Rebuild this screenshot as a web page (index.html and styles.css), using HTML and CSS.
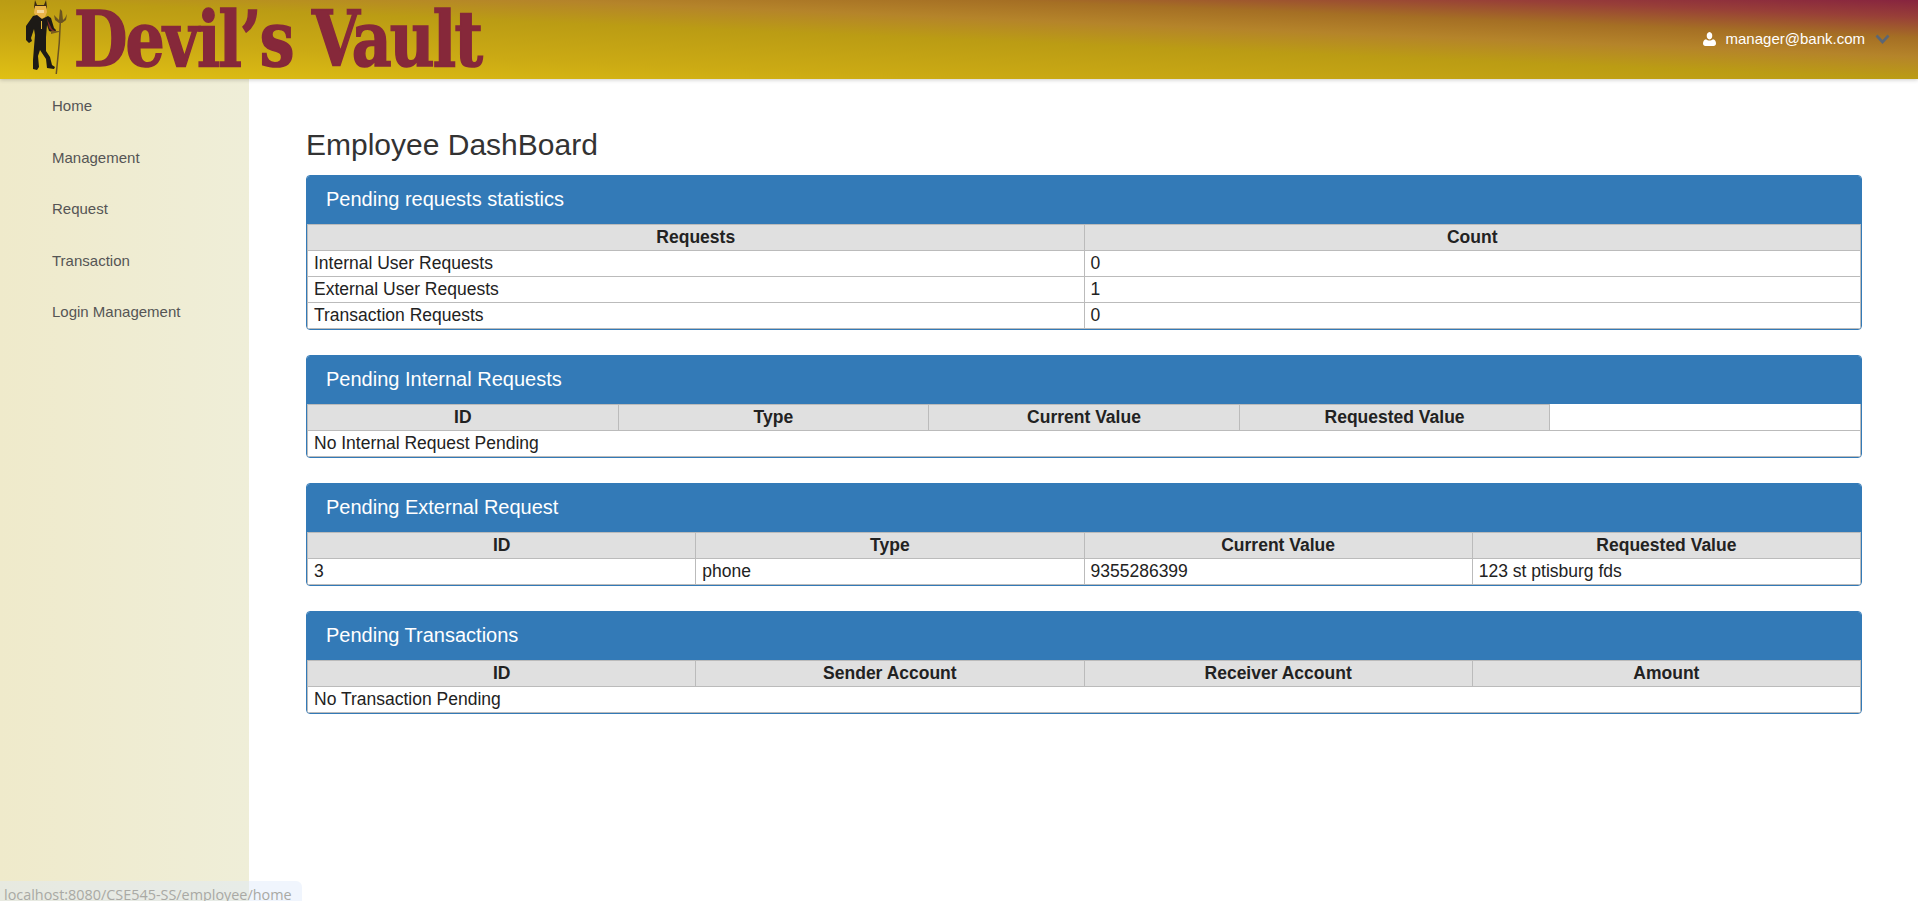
FILE: index.html
```html
<!DOCTYPE html>
<html lang="en">
<head>
<meta charset="utf-8">
<title>Employee DashBoard</title>
<link rel="stylesheet" href="styles.css">
</head>
<body>
<header class="topbar">
  <a class="brand" href="#">
    <svg class="mascot" width="70" height="79" viewBox="0 0 70 79">
      <path d="M35 0l2 5h7l2-5 1 7-2 5H36l-2-5z" fill="#3a2a14"/>
      <path d="M35 6h11l1 6-2 5-4 2-4-1-3-5z" fill="#e9b44a"/>
      <path d="M37 10h7v3h-7z" fill="#f4d79a"/>
      <path d="M33 16l4-1 5 4 6-3 3 2 3 10 2 2-1 3-6-2-2-6-1 12 0 14 4 6 2 8 3 2-1 2-7-1-1-9-6-9-2 6 1 11-2 3-4-1 0-9 1-13 1-12-1-6-3 9 1 3-3 2-3-3 0-14z" fill="#1d1a16"/>
      <path d="M47 19l5 10 3 2-2 1-4-4z" fill="#7c2a2c"/>
      <path d="M41 21v8h1v-8z" fill="#e2b43a"/>
      <path d="M51 31l8 0v1l-8 2z" fill="#7a5c1e"/>
      <path d="M60 13l-1.500 30-3 31 1.500 0 3-31 1.500-30z" fill="#6b5320"/>
      <path d="M54 15l1 5 4 3h3l4-3 1-6-2 4-2 2-1-9-2-2-1 11-2-2z" fill="#6b5320"/>
    </svg>
    <span class="logo-word">Devil’s Vault</span>
  </a>
  <div class="account">
    <svg class="user-icon" width="13" height="14" viewBox="0 0 13 14"><path d="M6.500 0a3.300 3.800 0 0 1 0 7.500 3.300 3.800 0 0 1 0-7.500zM3 7.200c1 .9 2.200 1.300 3.500 1.300s2.500-.4 3.500-1.300c2 .3 3 2 3 4.300 0 1.500-1 2.500-2.400 2.500H2.400C1 14 0 13 0 11.500c0-2.300 1-4 3-4.300z" fill="#fff"/></svg>
    <span class="account-name">manager@bank.com</span>
    <svg class="chevron" width="15" height="10" viewBox="0 0 15 10"><path d="M1.500 1.500l6 6.500 6-6.500" fill="none" stroke="#5b6675" stroke-width="2.600"/></svg>
  </div>
</header>
<div class="shell">
  <nav class="sidebar">
    <a href="#">Home</a>
    <a href="#">Management</a>
    <a href="#">Request</a>
    <a href="#">Transaction</a>
    <a href="#">Login Management</a>
  </nav>
  <main class="content">
    <h2 class="page-title">Employee DashBoard</h2>

    <section class="panel">
      <h3 class="panel-heading">Pending requests statistics</h3>
      <table class="grid">
        <tr><th>Requests</th><th>Count</th></tr>
        <tr><td>Internal User Requests</td><td>0</td></tr>
        <tr><td>External User Requests</td><td>1</td></tr>
        <tr><td>Transaction Requests</td><td>0</td></tr>
      </table>
    </section>

    <section class="panel">
      <h3 class="panel-heading">Pending Internal Requests</h3>
      <table class="grid">
        <tr><th>ID</th><th>Type</th><th>Current Value</th><th>Requested Value</th><th class="blank"></th></tr>
        <tr><td colspan="5">No Internal Request Pending</td></tr>
      </table>
    </section>

    <section class="panel">
      <h3 class="panel-heading">Pending External Request</h3>
      <table class="grid">
        <tr><th>ID</th><th>Type</th><th>Current Value</th><th>Requested Value</th></tr>
        <tr><td>3</td><td>phone</td><td>9355286399</td><td>123 st ptisburg fds</td></tr>
      </table>
    </section>

    <section class="panel">
      <h3 class="panel-heading">Pending Transactions</h3>
      <table class="grid">
        <tr><th>ID</th><th>Sender Account</th><th>Receiver Account</th><th>Amount</th></tr>
        <tr><td colspan="4">No Transaction Pending</td></tr>
      </table>
    </section>
  </main>
</div>
<div class="status-bubble">localhost:8080/CSE545-SS/employee/home</div>
</body>
</html>
```
FILE: styles.css
```css
* { box-sizing: border-box; }
html, body { height: 100%; margin: 0; overflow: hidden; }
body {
  display: flex;
  flex-direction: column;
  font-family: "Liberation Sans", Arial, sans-serif;
  font-size: 16px;
  color: #222;
  background: #fff;
}
a { text-decoration: none; }

.topbar {
  flex: 0 0 79px;
  display: flex;
  align-items: center;
  justify-content: space-between;
  background: linear-gradient(to top right, #e0c014 0%, #cbaa14 26%, #bb9c14 50%, #b5842a 64%, #a56f24 76%, #983f38 89%, #87243f 100%);
  box-shadow: 0 1px 4px rgba(0, 0, 0, .2);
  position: relative;
  z-index: 1;
}
.brand { display: flex; align-items: center; height: 79px; padding-left: 0; }
.mascot { flex: none; }
.logo-word {
  display: block;
  margin-left: 4px;
  font-family: "DejaVu Serif", "Liberation Serif", serif;
  font-weight: 700;
  font-stretch: condensed;
  font-size: 76px;
  line-height: 79px;
  color: #86283a;
  -webkit-text-stroke: 1.500px #86283a;
  letter-spacing: -2px;
  white-space: nowrap;
  transform: scaleX(.9);
  transform-origin: left center;
}
.account {
  display: flex;
  align-items: center;
  color: #fff;
  font-size: 15px;
  padding: 0 28px 2px 0;
}
.account-name { margin: 0 10px 0 10px; }

.shell { flex: 1; display: flex; min-height: 0; }
.sidebar {
  flex: 0 0 249px;
  display: flex;
  flex-direction: column;
  background: linear-gradient(to right, #efeacb, #efeed8);
  padding-top: 1px;
}
.sidebar a {
  display: block;
  height: 51.500px;
  line-height: 51.500px;
  padding-left: 52px;
  font-size: 15px;
  color: #555;
}

.content { flex: 1; padding: 0 56px 0 57px; min-width: 0; }
.page-title {
  margin: 49px 0 0;
  height: 47px;
  line-height: 34px;
  font-size: 30px;
  font-weight: 400;
  color: #333;
}
.panel {
  margin-bottom: 25.500px;
  border: 1px solid #337ab7;
  border-radius: 4px;
  overflow: hidden;
  background: #fff;
}
.panel-heading {
  margin: 0;
  height: 47.500px;
  padding: 0 19px;
  background: #337ab7;
  color: #fff;
  font-size: 20px;
  font-weight: 400;
  line-height: 46px;
}
.grid {
  width: 100%;
  table-layout: fixed;
  border-collapse: collapse;
  font-size: 17.500px;
  line-height: 23px;
}
.grid th, .grid td {
  border: 1px solid #bbb;
  padding: 1px 6px;
  height: 26px;
}
.grid th { background: #e0e0e0; font-weight: 700; text-align: center; }
.grid th.blank { background: #fff; border-top: 0; }
.status-bubble {
  position: absolute;
  left: 0;
  top: 881px;
  width: 302px;
  height: 24px;
  padding: 4px 0 0 4px;
  border-top-right-radius: 6px;
  background: rgba(222, 232, 250, .45);
  color: #a9a9a4;
  font-family: "Open Sans", sans-serif;
  font-size: 14.400px;
  line-height: 20px;
  white-space: nowrap;
}
```
